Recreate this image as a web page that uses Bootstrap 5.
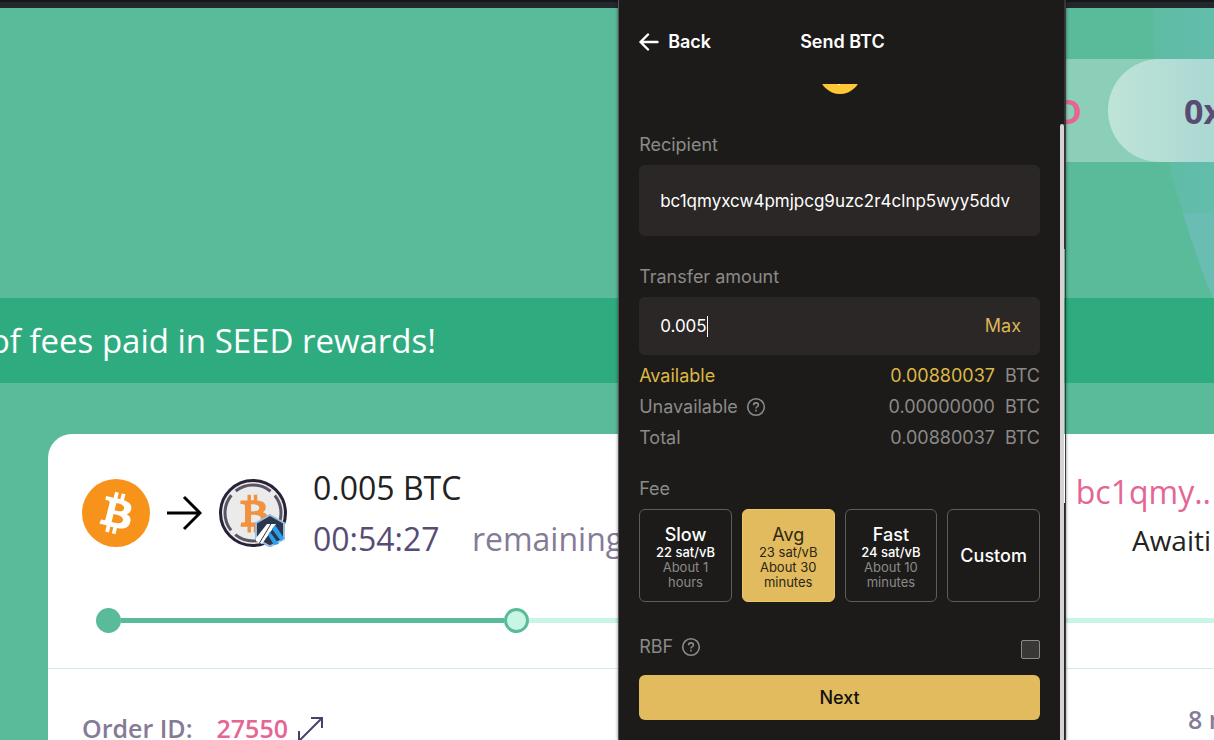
<!DOCTYPE html>
<html lang="en">
<head>
<meta charset="utf-8">
<meta name="viewport" content="width=device-width, initial-scale=1">
<title>Send BTC</title>
<link href="https://cdn.jsdelivr.net/npm/bootstrap@5.3.0/dist/css/bootstrap.min.css" rel="stylesheet">
<script src="https://cdn.jsdelivr.net/npm/bootstrap@5.3.0/dist/js/bootstrap.bundle.min.js" defer></script>
<style>
  :root { --leaf: #5abb9a; --mint: #c8f5e4; --pink: #e56693; --plum: #584c74; --haze: #857b97; --gold: #e1bb5d; --ink: #1c1b19; --ash: #8b8a88; }
  body { font-family: "Open Sans", "Noto Sans", sans-serif; background: var(--leaf); }
  svg { display: block; flex: none; }
  .pink { color: var(--pink); }
  .plum { color: var(--plum); }
  .haze { color: var(--haze); }

  /* swap site */
  .top-edge { height: 8px; background: #23282c; border-top: 2px solid #15171b; }
  .hero { height: 290px; padding-top: 51px; }
  .hero-glow { top: 0; right: 0; }
  .wallet-bar { width: 560px; height: 103px; background: rgba(255,255,255,.3); font-size: 34px; line-height: 48px; font-weight: 700; }
  .wallet-seed { color: var(--pink); margin-right: 26px; }
  .wallet-pill { width: 106px; height: 103px; padding-left: 76px; color: var(--plum); border-radius: 52px 0 0 52px; background: linear-gradient(90deg, #bfe4d8, #abd8d3); }
  .promo { height: 85px; background: #2eac7f; color: #fff; font-size: 33px; padding-right: 778px; }
  .order-card { margin: 51px 0 0 48px; border-radius: 24px 0 0 0; }
  .order-top { padding: 28px 3px 0 34px; height: 157px; }
  .order-text { font-size: 32px; line-height: 51px; color: #222; }
  .order-state { font-size: 28px; line-height: 46px; }
  .coins { gap: 17px; margin-right: 26px; padding-top: 17px; }
  .steps-row { height: 30px; padding-left: 48px; margin-top: 14px; }
  .step { width: 36.5%; }
  .step-dot { width: 25px; height: 25px; border-radius: 50%; background: var(--leaf); flex: none; }
  .step-now { border: 3px solid var(--leaf); background: var(--mint); }
  .step-line { height: 5px; background: var(--leaf); }
  .step-todo { background: var(--mint); }
  .order-foot { margin-top: 33px; border-top: 1px solid #d3ede4; padding: 39px 0 0 34px; height: 120px; font-size: 25px; font-weight: 600; line-height: 40px; color: var(--haze); }
  .eta { width: 26px; line-height: 22px; }

  /* wallet window */
  .wallet { left: calc(51% - 1px); top: 0; bottom: 0; width: 448px; font-family: Inter, "Liberation Sans", sans-serif; font-size: 18px; line-height: 24px; color: #fff; box-shadow: 0 0 3px rgba(0,0,0,.5); border-left: 1px solid #555; border-right: 1px solid #3a3b3d; }
  .wallet-body { background: var(--ink); padding: 0 20px; }
  .wallet-track { width: 5px; background: var(--ink); padding-top: 124px; }
  .wallet-thumb { background: #d6d3d2; border-radius: 2px 2px 0 0; height: 100%; }
  .wallet-edge { width: 1px; background: linear-gradient(#333 249px, transparent 249px 503px, #26262a 503px); }
  .wallet-head { height: 84px; font-weight: 600; }
  .back-btn { color: #fff; font-size: 18px; font-weight: 600; line-height: 24px; gap: 9px; }
  .head-side { width: 161px; }
  .coin-peek { height: 10px; overflow: hidden; }
  .ash { color: var(--ash); }
  .field-label { display: block; color: var(--ash); margin-bottom: 8px; }
  .field-first { margin-top: 39px; }
  .field-next { margin-top: 29px; }
  .field { background: #2b2726; border-radius: 6px; padding: 0 19px 0 21px; }
  .field input { background: none; border: 0; outline: 0; color: #fff; padding: 0; min-width: 0; font-size: 17px; caret-color: transparent; }
  .field-lg { height: 71px; }
  .field-md { height: 58px; }
  .amount { width: 47px; }
  .text-caret { width: 1px; height: 21px; background: #fff; }
  .gold-btn { color: #dbb458; font-size: 18px; line-height: 24px; }
  .balance { line-height: 31px; padding-top: 5px; }
  .balance .unit { margin-left: 10px; }
  .avail { color: #ddb746; }
  .fees { gap: 10px; }
  .fee-title { margin-top: 24px; }
  .fee { flex: 1 1 0; height: 93px; border: 1px solid #5e5d5b; border-radius: 6px; background: none; color: #fff; font-size: 13px; line-height: 15px; padding: 4px 8px 0; font-weight: 500; }
  .fee-name { font-size: 18px; line-height: 20px; }
  .fee .ash { font-weight: 400; }
  .fee-on { background: var(--gold); border-color: #ecc76b; color: #2c2618; font-weight: 400; }
  .rbf-row { margin-top: 33px; }
  .rbf { appearance: none; width: 19px; height: 19px; border: 1px solid #8b8a88; border-radius: 2px; background: #3a3837; margin-top: 5px; }
  .rbf:checked { background: var(--gold); }
  .next-btn { height: 45px; border-radius: 6px; background: var(--gold); color: #111; font-size: 18px; font-weight: 500; border: 0; margin-top: 16px; }
  .next-btn:hover { background: #eac66c; }
</style>
</head>
<body>
<div class="position-relative vh-100 overflow-hidden">

  <div class="top-edge"></div>
  <header class="hero position-relative">
    <svg class="hero-glow position-absolute" width="61" height="290" viewBox="0 0 61 290" aria-hidden="true">
      <defs><linearGradient id="glow"><stop offset="0" stop-color="#5fbca3"/><stop offset="1" stop-color="#62bdab"/></linearGradient></defs>
      <path d="M0 0C0 50 3 105 16 154Q22 182 30 205T60 290H61V0Z" fill="url(#glow)"/>
      <path d="M30 205Q42 248 60 290H61V205Z" fill="#69bdb2"/>
    </svg>
    <div class="wallet-bar position-relative ms-auto d-flex align-items-center justify-content-end">
      <span class="wallet-seed">D</span>
      <div class="wallet-pill d-flex align-items-center overflow-hidden">0x</div>
    </div>
  </header>

  <div class="promo d-flex align-items-center justify-content-end text-nowrap">of fees paid in SEED rewards!</div>

  <main class="order-card bg-white">
    <section class="order-top d-flex">
      <div class="coins d-flex">
        <svg width="68" height="68" viewBox="0 0 32 32" role="img" aria-label="Bitcoin">
          <defs><path id="btc" d="M23.189 14.02c.314-2.096-1.283-3.223-3.465-3.975l.708-2.84-1.728-.43-.69 2.765c-.454-.114-.92-.22-1.385-.326l.695-2.783L15.596 6l-.708 2.839c-.376-.086-.746-.17-1.104-.26l.002-.009-2.384-.595-.46 1.846s1.283.294 1.256.312c.7.175.826.638.805 1.006l-.806 3.235c.048.012.11.03.18.057l-.183-.045-1.13 4.532c-.086.212-.303.531-.793.41.018.025-1.256-.313-1.256-.313l-.858 1.978 2.25.561c.418.105.828.215 1.231.318l-.715 2.872 1.727.43.708-2.84c.472.127.93.245 1.378.357l-.706 2.828 1.728.43.715-2.866c2.948.558 5.164.333 6.097-2.333.752-2.146-.037-3.385-1.588-4.192 1.13-.26 1.98-1.003 2.207-2.538zm-3.95 5.538c-.533 2.147-4.148.986-5.32.695l.95-3.805c1.172.293 4.929.872 4.37 3.11zm.535-5.569c-.487 1.953-3.495.96-4.47.717l.86-3.45c.975.243 4.118.696 3.61 2.733z"/></defs>
          <circle cx="16" cy="16" r="16" fill="#f7931a"/><use href="#btc" fill="#fff"/>
        </svg>
        <svg width="35" height="68" viewBox="0 0 35 68" fill="none" stroke="#000" stroke-width="3" aria-hidden="true"><path d="M0 34H33M17 18L33 34L17 50"/></svg>
        <svg width="68" height="68" viewBox="0 0 68 68" role="img" aria-label="Wrapped Bitcoin on Arbitrum">
          <circle cx="34" cy="34" r="32.5" fill="#ebebeb" stroke="#282138" stroke-width="3"/>
          <circle cx="34" cy="34" r="28" fill="none" stroke="#5a5564" stroke-width="3" stroke-dasharray="38 6" stroke-dashoffset="19" transform="rotate(-90 34 34)"/>
          <use href="#btc" fill="#f09242" transform="translate(34 34.500) rotate(-14) scale(1.960) translate(-16 -16)"/>
          <path d="M51 36L65 44V60L51 67.500L37 60V44Z" fill="#2d374b" stroke="#96bee0" stroke-width="2"/>
          <path d="M48 45H57L43 65L37 62V59Z" fill="#fff"/>
          <path d="M56 46L65 59L62 62L53 50ZM51 53L60 65L55 66L49 56Z" fill="#28a0f0"/>
          <path d="M52.500 44L40.500 64" stroke="#2d374b" stroke-width="1"/>
        </svg>
      </div>
      <div class="order-text text-nowrap">
        <div>0.005 BTC</div>
        <div class="plum">00:54:27 <span class="ms-3 ps-2 haze">remaining</span></div>
      </div>
      <div class="order-text text-nowrap text-end ms-auto">
        <a href="#" class="d-block text-decoration-none pt-1 pink">bc1qmy..</a>
        <div class="order-state">Awaiti</div>
      </div>
    </section>

    <div class="steps-row d-flex align-items-center overflow-hidden">
      <div class="step d-flex align-items-center"><span class="step-dot"></span><span class="step-line flex-grow-1"></span></div>
      <div class="d-flex align-items-center flex-grow-1"><span class="step-dot step-now"></span><span class="step-line step-todo flex-grow-1"></span></div>
    </div>

    <section class="order-foot d-flex text-nowrap">
      <span>Order ID:</span>
      <a href="#" class="text-decoration-none ms-4 pink">27550</a>
      <svg class="ms-2 mt-2 ps-0" width="28" height="27" viewBox="-1 0 28 27" fill="none" stroke="#4a4266" stroke-width="2" aria-hidden="true"><path d="M2 25L25 2M14 2H25V12M2 15V25H13"/></svg>
      <span class="ms-auto overflow-hidden eta">8 m</span>
    </section>
  </main>

  <aside class="wallet position-absolute d-flex">
    <div class="wallet-body flex-grow-1">
      <div class="wallet-head d-flex align-items-center">
        <div class="head-side">
          <button class="back-btn btn p-0 border-0 d-flex align-items-center" type="button">
            <svg width="20" height="18" viewBox="0 0 20 18" fill="none" stroke="#fff" stroke-width="2.400" stroke-linecap="round" stroke-linejoin="round" aria-hidden="true"><path d="M18.500 9H1.500M9 1.500L1.500 9L9 16.500"/></svg>
            Back
          </button>
        </div>
        <span>Send BTC</span>
      </div>
      <div class="coin-peek d-flex justify-content-center align-items-end">
        <svg width="42" height="42" viewBox="0 0 42 42" aria-hidden="true"><circle cx="21" cy="21" r="21" fill="#fdc737"/><path d="M19 32h2v1h-2z" fill="#fff"/></svg>
      </div>

      <label class="field-label field-first" for="recipient">Recipient</label>
      <div class="field field-lg d-flex"><input id="recipient" class="flex-grow-1" value="bc1qmyxcw4pmjpcg9uzc2r4clnp5wyy5ddv"></div>

      <label class="field-label field-next" for="amount">Transfer amount</label>
      <div class="field field-md d-flex align-items-center">
        <input id="amount" class="amount" value="0.005">
        <span class="text-caret"></span>
        <button class="gold-btn btn p-0 border-0 ms-auto" type="button">Max</button>
      </div>

      <div class="balance">
        <div class="d-flex avail"><span class="me-auto">Available</span>0.00880037<span class="unit ash">BTC</span></div>
        <div class="d-flex ash"><span>Unavailable</span>
          <svg class="ms-2 me-auto align-self-center" width="20" height="20" viewBox="0 0 20 20" fill="none" stroke="#8b8a88" stroke-width="1.600" aria-hidden="true"><circle cx="10" cy="10" r="8.300"/><path id="q" d="M7.600 8.200Q7.600 5.900 10 5.900T12.400 8Q12.400 9.200 11 9.900Q10 10.400 10 11.500M10 12.800V14.400"/></svg>
          0.00000000<span class="unit">BTC</span></div>
        <div class="d-flex ash"><span class="me-auto">Total</span>0.00880037<span class="unit">BTC</span></div>
      </div>

      <div class="field-label fee-title">Fee</div>
      <div class="fees d-flex">
        <button type="button" class="fee"><span class="fee-name d-block">Slow</span>22 sat/vB<span class="ash d-block">About 1 hours</span></button>
        <button type="button" class="fee fee-on"><span class="fee-name d-block">Avg</span>23 sat/vB<span class="d-block">About 30 minutes</span></button>
        <button type="button" class="fee"><span class="fee-name d-block">Fast</span>24 sat/vB<span class="ash d-block">About 10 minutes</span></button>
        <button type="button" class="fee pt-0"><span class="fee-name">Custom</span></button>
      </div>

      <div class="rbf-row d-flex ash align-items-center">
        <label for="rbf">RBF</label>
        <svg class="ms-2 me-auto" width="20" height="20" viewBox="0 0 20 20" fill="none" stroke="#8b8a88" stroke-width="1.600" aria-hidden="true"><circle cx="10" cy="10" r="8.300"/><use href="#q"/></svg>
        <input id="rbf" class="rbf" type="checkbox">
      </div>
      <button type="button" class="next-btn w-100 d-block">Next</button>
    </div>
    <div class="wallet-track"><div class="wallet-thumb"></div></div>
    <div class="wallet-edge"></div>
  </aside>
</div>
</body>
</html>
